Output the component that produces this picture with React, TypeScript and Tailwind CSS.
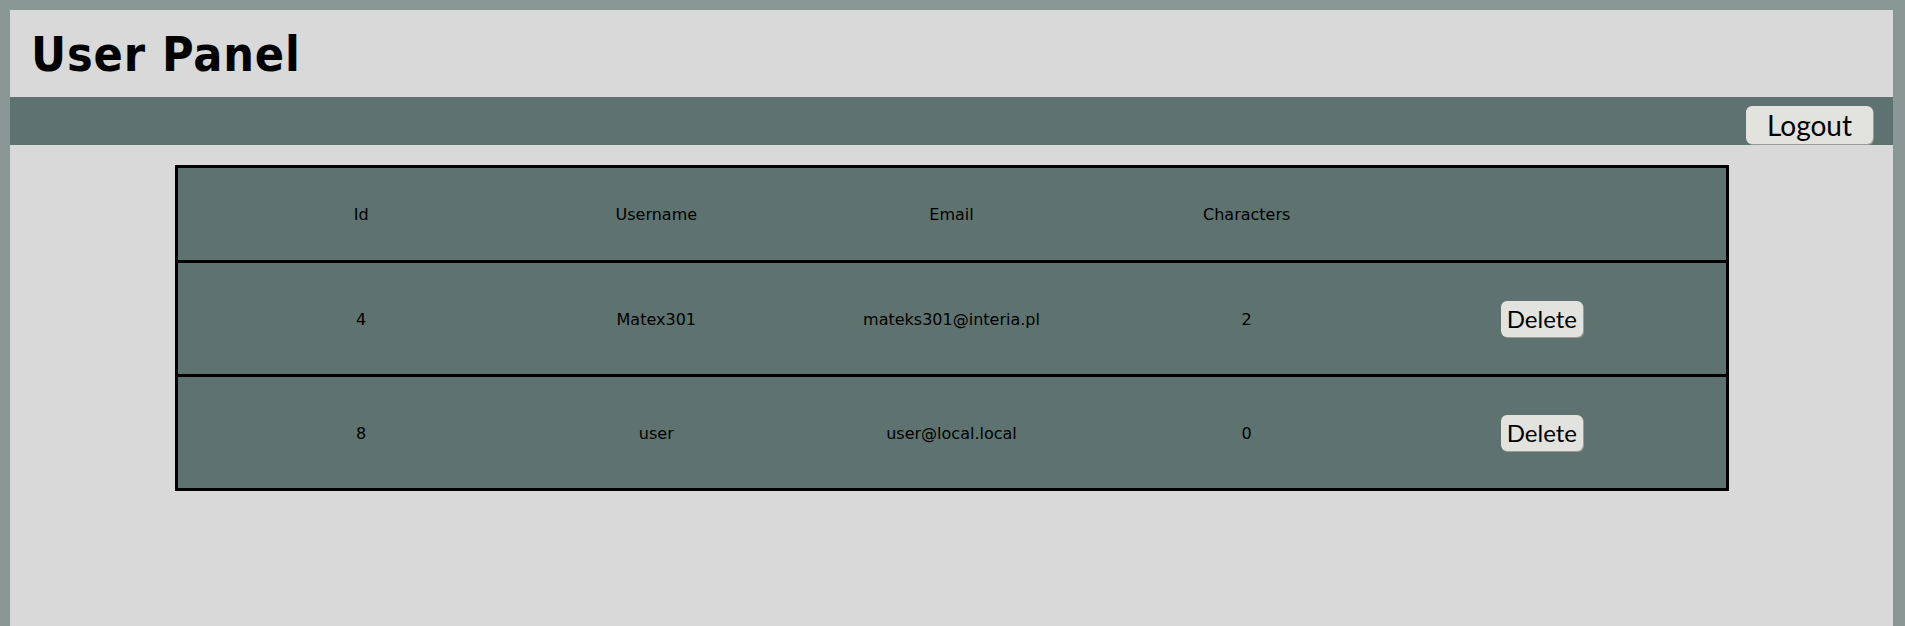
import React from 'react';

interface UserRow {
  id: number;
  username: string;
  email: string;
  characters: number;
}

const USERS: UserRow[] = [
  { id: 4, username: 'Matex301', email: 'mateks301@interia.pl', characters: 2 },
  { id: 8, username: 'user', email: 'user@local.local', characters: 0 },
];

const cell = 'flex items-center justify-center pt-[2px]';

const App: React.FC = () => {
  return (
    <div className="min-h-screen bg-[#899795] pt-[10px] pl-[10px] pr-[12px] font-['DejaVu_Sans',Verdana,sans-serif] text-black">
      <div className="min-h-[616px] bg-[#d9d9d9]">
        {/* Title */}
        <header className="h-[87px] flex items-center pl-[21px]">
          <h1 className="text-[48px] font-bold leading-none font-['DejaVu_Sans_Condensed','DejaVu_Sans',sans-serif] tracking-[0.9px]">User Panel</h1>
        </header>

        {/* Nav bar */}
        <nav className="h-[48px] bg-[#5e736f] flex justify-end items-start pt-[9px] pr-[20px]">
          <button className="h-[38px] w-[127px] rounded-[6px] bg-[#e2e2de] shadow-[1px_1px_0_#9a9a96] font-['Lato',sans-serif] text-[28px] leading-none">
            Logout
          </button>
        </nav>

        {/* Users table */}
        <main className="pt-[20px] flex justify-center">
          <div className="w-[1554px] border-[3px] border-black bg-[#5e736f] text-[16px]">
            <div className="grid grid-cols-5 px-[36px] h-[95px] border-b-[3px] border-black">
              <div className={cell}>Id</div>
              <div className={cell}>Username</div>
              <div className={cell}>Email</div>
              <div className={cell}>Characters</div>
              <div className={cell}></div>
            </div>
            {USERS.map((u, i) => (
              <div
                key={u.id}
                className={`grid grid-cols-5 px-[36px] ${i < USERS.length - 1 ? 'h-[114px] border-b-[3px] border-black' : 'h-[111px]'}`}
              >
                <div className={cell}>{u.id}</div>
                <div className={cell}>{u.username}</div>
                <div className={cell}>{u.email}</div>
                <div className={cell}>{u.characters}</div>
                <div className="flex items-center justify-center">
                  <button className="h-[36px] px-[6px] rounded-[6px] bg-[#e2e2de] shadow-[1px_1px_0_#9a9a96] font-['Lato',sans-serif] text-[24px] leading-none">
                    Delete
                  </button>
                </div>
              </div>
            ))}
          </div>
        </main>
      </div>
    </div>
  );
};

export default App;
